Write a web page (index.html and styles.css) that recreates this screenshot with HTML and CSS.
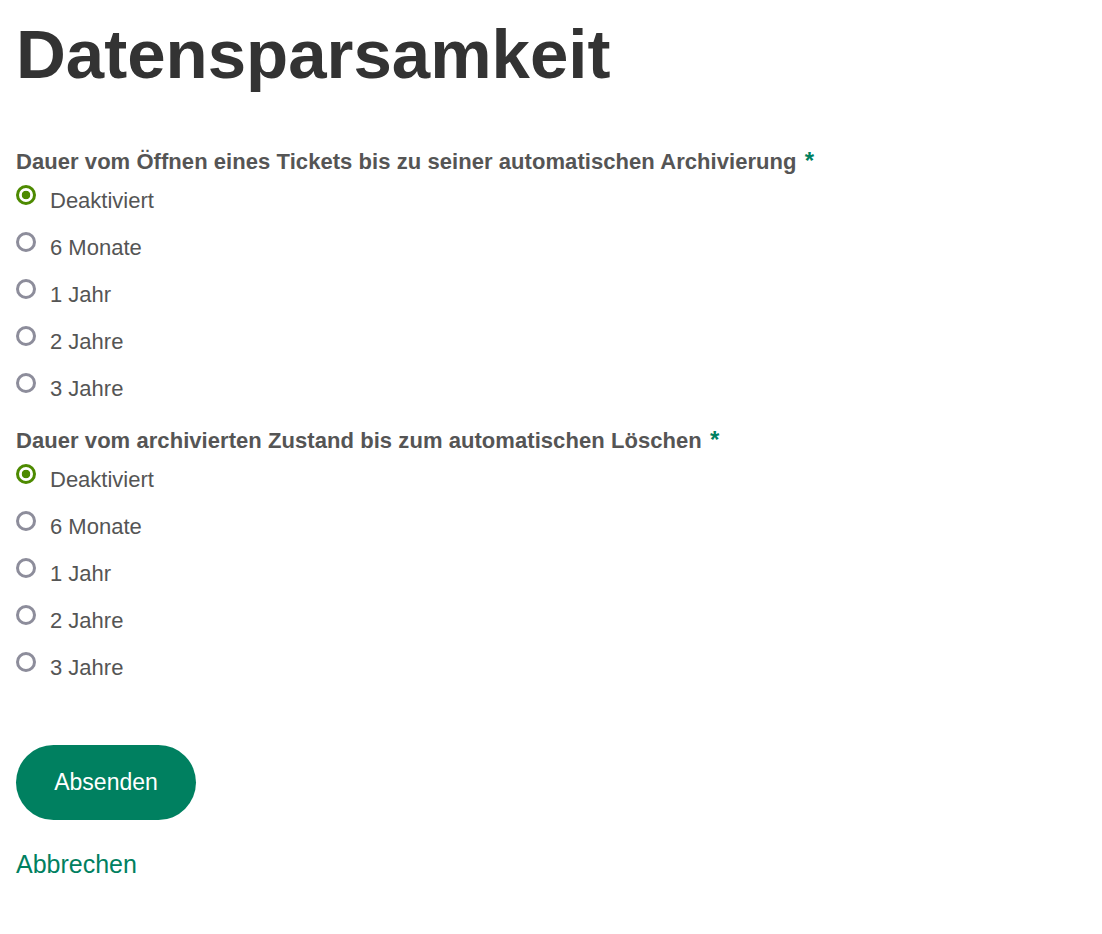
FILE: index.html
```html
<!DOCTYPE html>
<html lang="de">
<head>
<meta charset="utf-8">
<title>Datensparsamkeit</title>
<link rel="stylesheet" href="styles.css">
</head>
<body>
<main class="page">
  <h1 class="title">Datensparsamkeit</h1>
  <form class="form">
    <fieldset class="group">
      <legend class="legend">Dauer vom Öffnen eines Tickets bis zu seiner automatischen Archivierung <span class="req">*</span></legend>
      <label class="option"><input type="radio" name="archive" checked><span>Deaktiviert</span></label>
      <label class="option"><input type="radio" name="archive"><span>6 Monate</span></label>
      <label class="option"><input type="radio" name="archive"><span>1 Jahr</span></label>
      <label class="option"><input type="radio" name="archive"><span>2 Jahre</span></label>
      <label class="option"><input type="radio" name="archive"><span>3 Jahre</span></label>
    </fieldset>
    <fieldset class="group">
      <legend class="legend">Dauer vom archivierten Zustand bis zum automatischen Löschen <span class="req">*</span></legend>
      <label class="option"><input type="radio" name="delete" checked><span>Deaktiviert</span></label>
      <label class="option"><input type="radio" name="delete"><span>6 Monate</span></label>
      <label class="option"><input type="radio" name="delete"><span>1 Jahr</span></label>
      <label class="option"><input type="radio" name="delete"><span>2 Jahre</span></label>
      <label class="option"><input type="radio" name="delete"><span>3 Jahre</span></label>
    </fieldset>
    <div class="actions">
      <button type="button" class="submit">Absenden</button>
      <a class="cancel" href="#">Abbrechen</a>
    </div>
  </form>
</main>
</body>
</html>
```
FILE: styles.css
```css
html, body {
  margin: 0;
  padding: 0;
  background: #fff;
}
body {
  font-family: "Liberation Sans", Arial, sans-serif;
  color: #555;
}
.page {
  padding: 17px 16px 40px;
}
.title {
  margin: 0;
  font-size: 69px;
  line-height: 76px;
  font-weight: bold;
  color: #333;
}
.form {
  margin-top: 55px;
  display: flex;
  flex-direction: column;
}
.group {
  border: 0;
  margin: 0 0 7px;
  padding: 0;
  display: flex;
  flex-direction: column;
}
.legend {
  padding: 0;
  font-size: 22px;
  line-height: 26px;
  font-weight: bold;
  letter-spacing: 0.06px;
  color: #555;
  margin-bottom: 10px;
}
.req {
  color: #008060;
  font-size: 24px;
  margin-left: 2px;
}
.option {
  display: flex;
  align-items: flex-start;
  gap: 14px;
  height: 47px;
  font-size: 22px;
  line-height: 26px;
  color: #555;
}
.option span {
  margin-top: 3px;
}
.option input {
  appearance: none;
  -webkit-appearance: none;
  margin: 0;
  width: 20px;
  height: 20px;
  flex: none;
  border: 3px solid #8d8d9b;
  border-radius: 50%;
  box-sizing: border-box;
  background: #fff;
}
.option input:checked {
  border-color: #4d8a00;
  background: radial-gradient(circle, #4d8a00 0 4px, #fff 4.6px);
}
.actions {
  margin-top: 39px;
  display: flex;
  flex-direction: column;
  align-items: flex-start;
  gap: 30px;
}
.submit {
  width: 180px;
  height: 75px;
  border: 0;
  border-radius: 38px;
  background: #008060;
  color: #fff;
  font-family: "Liberation Sans", Arial, sans-serif;
  font-size: 23px;
}
.cancel {
  color: #008060;
  text-decoration: none;
  font-size: 25px;
}
```
